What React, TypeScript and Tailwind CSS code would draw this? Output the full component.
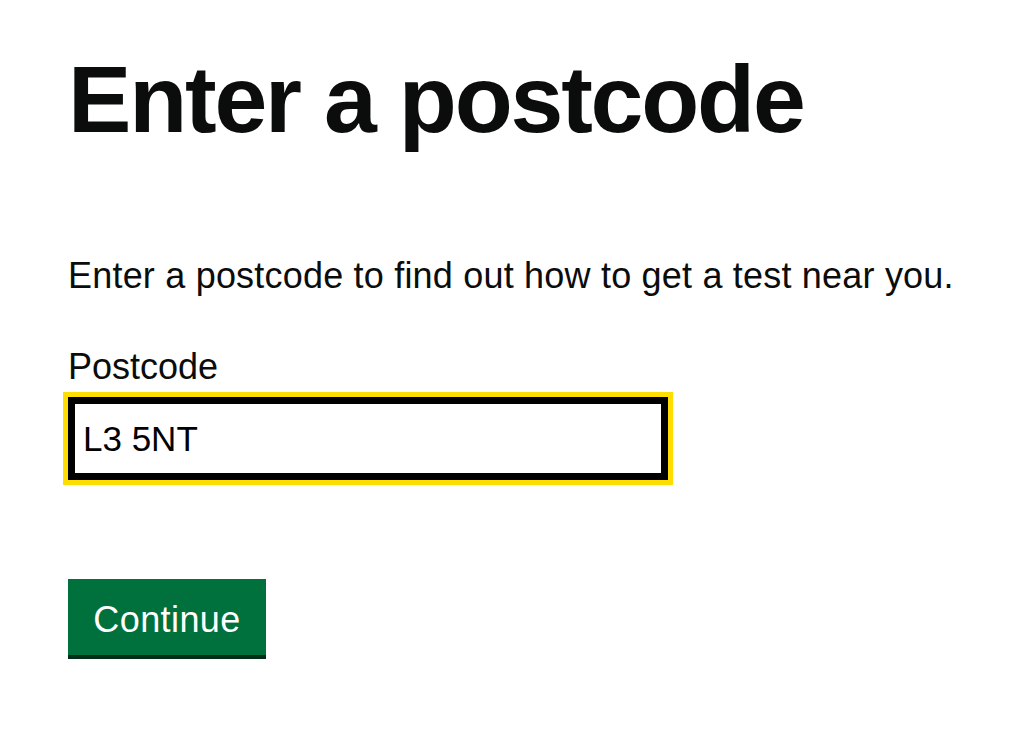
import React, { useState } from "react";

function App() {
  const [postcode, setPostcode] = useState<string>("L3 5NT");

  return (
    <div className="min-h-[732px] bg-white pl-[68px] pt-[49px] font-['Liberation_Sans',Arial,sans-serif] text-[#0b0c0c]">
      <h1 className="text-[95px] font-bold leading-[100px] tracking-[-2.2px]">
        Enter a postcode
      </h1>
      <p className="mt-[107px] text-[36px] leading-[40px] tracking-[0.2px]">
        Enter a postcode to find out how to get a test near you.
      </p>
      <form
        onSubmit={(e) => e.preventDefault()}
        className="flex flex-col items-start"
      >
        <label htmlFor="postcode" className="mt-[51px] text-[36px] leading-[40px]">
          Postcode
        </label>
        <input
          id="postcode"
          type="text"
          value={postcode}
          onChange={(e) => setPostcode(e.target.value)}
          className="mt-[10px] h-[83px] w-[600px] border-[7px] border-black bg-white pl-[8px] text-[35px] text-black shadow-[0_0_0_5px_#ffdd00] outline-none"
        />
        <button
          type="submit"
          className="mt-[99px] h-[76px] w-[198px] bg-[#00703c] pt-[5px] text-[36px] leading-[40px] tracking-[0.4px] text-white shadow-[0_4px_0_#002d18]"
        >
          Continue
        </button>
      </form>
    </div>
  );
}

export default App;
